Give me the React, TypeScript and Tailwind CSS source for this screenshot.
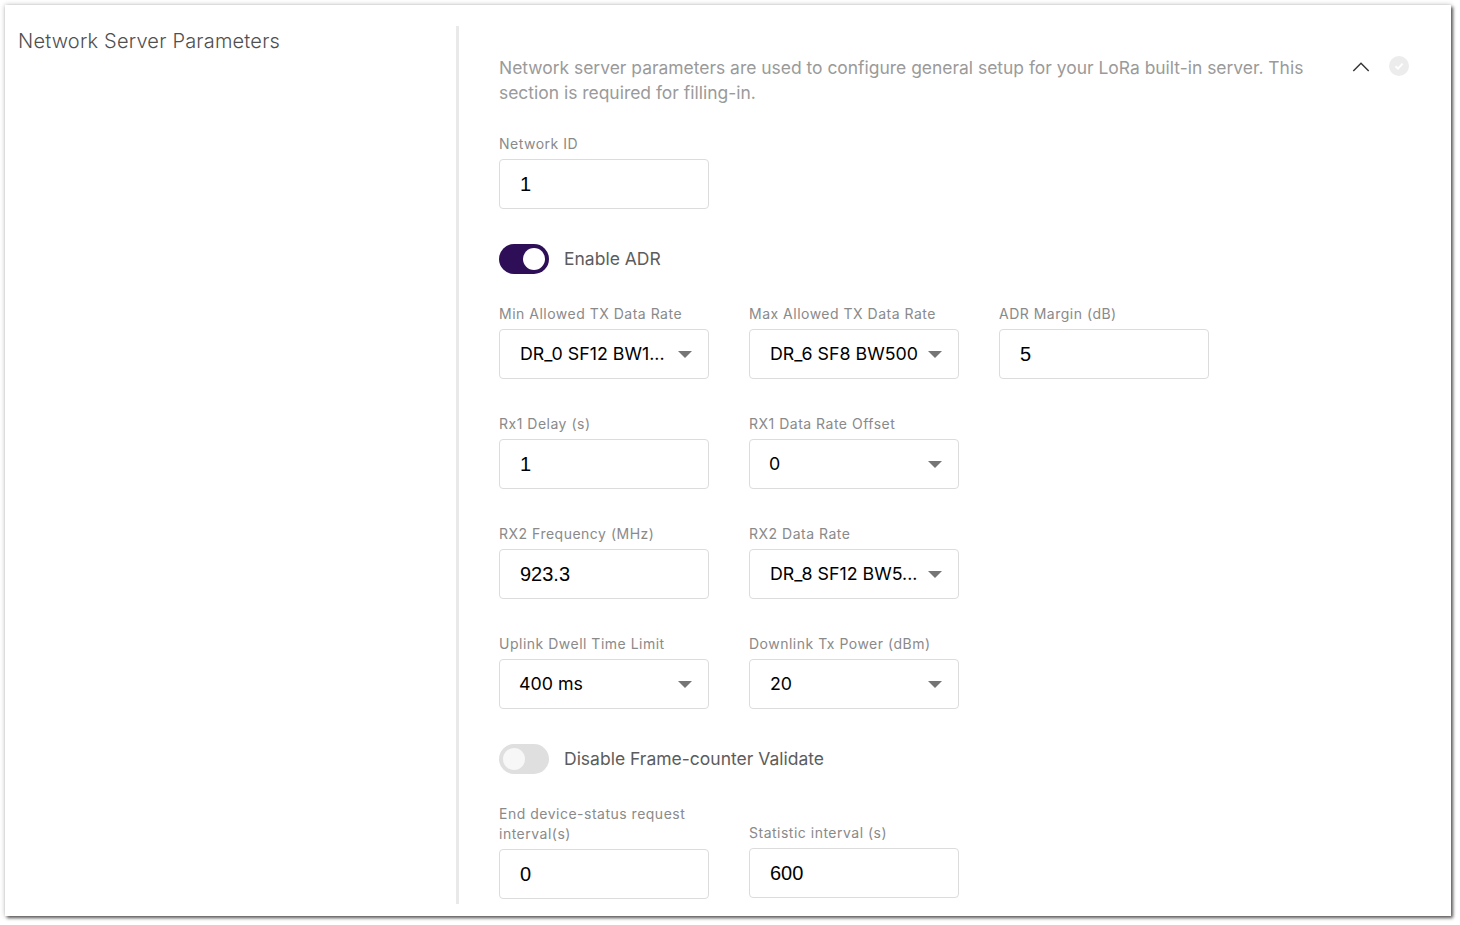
function Label({ children }: { children: React.ReactNode }) {
  return <div className="mb-[5px] text-[14px] leading-[20px] tracking-[0.5px] text-[#8a8a8a]">{children}</div>;
}

function TextField({ label, value }: { label: string; value: string }) {
  return (
    <div className="w-[210px]">
      <Label>{label}</Label>
      <div className="flex h-[50px] items-center rounded border border-[#dcdcdc] bg-white pl-[20px] font-['Liberation_Sans',sans-serif] text-[20px] text-black">
        {value}
      </div>
    </div>
  );
}

function SelectField({ label, value, pad = "pl-[20px]" }: { label: string; value: string; pad?: string }) {
  return (
    <div className="w-[210px]">
      <Label>{label}</Label>
      <div className={`flex h-[50px] items-center justify-between rounded border border-[#dcdcdc] bg-white pr-[16px] text-[17.8px] text-black ${pad}`}>
        <span>{value}</span>
        <span className="h-0 w-0 border-x-[7px] border-t-[7px] border-x-transparent border-t-[#757575]" />
      </div>
    </div>
  );
}

function Toggle({ on, label }: { on: boolean; label: string }) {
  return (
    <div className="flex h-[30px] items-center gap-[15px]">
      {on ? (
        <div className="flex h-[30px] w-[50px] items-center justify-end rounded-full bg-[#2e0f57] pr-[4px]">
          <div className="h-[22px] w-[22px] rounded-full bg-white" />
        </div>
      ) : (
        <div className="flex h-[30px] w-[50px] items-center rounded-full bg-[#dfdfdf] pl-[4px]">
          <div className="h-[22px] w-[22px] rounded-full bg-[#f7f7f7]" />
        </div>
      )}
      <span className="text-[17.5px] text-[#5c5c5c]">{label}</span>
    </div>
  );
}

export default function App() {
  return (
    <div className="h-[925px] w-[1460px] bg-white pl-[5px] pt-[5px] font-['Inter',sans-serif]">
      <div className="flex h-[911px] w-[1446px] bg-white pb-[12px] pt-[21px] shadow-[2px_2px_3px_rgba(0,0,0,0.6),0_0_5px_rgba(0,0,0,0.25)]">
        <div className="w-[451px] shrink-0 pl-[13px] text-[20px] font-light leading-[30px] tracking-[0.2px] text-[#4f4f4f]">
          Network Server Parameters
        </div>
        <div className="flex-1 border-l-[3px] border-[#e9e9e9] pl-[40px] pt-[29px]">
          <div className="flex items-start">
            <p className="w-[820px] text-[17.45px] leading-[25px] text-[#9a9a9a]">
              Network server parameters are used to configure general setup for your LoRa built-in server. This section is required for filling-in.
            </p>
            <svg className="ml-[30px] mt-[1px] shrink-0" width="24" height="24" viewBox="0 0 24 24" fill="none">
              <path d="M4.3 15 12 7.3 19.7 15" stroke="#333333" strokeWidth="1.4" />
            </svg>
            <div className="ml-[16px] mt-[1px] flex h-[20px] w-[20px] items-center justify-center rounded-full bg-[#ececec]">
              <svg width="12" height="12" viewBox="0 0 12 12" fill="none">
                <path d="M2.5 6.2 5 8.6 9.6 3.6" stroke="#ffffff" strokeWidth="2" />
              </svg>
            </div>
          </div>

          <div className="mt-[29px]">
            <TextField label="Network ID" value="1" />
          </div>
          <div className="mt-[35px]">
            <Toggle on label="Enable ADR" />
          </div>
          <div className="mt-[30px] flex gap-[40px]">
            <SelectField label="Min Allowed TX Data Rate" value="DR_0 SF12 BW1..." />
            <SelectField label="Max Allowed TX Data Rate" value="DR_6 SF8 BW500" />
            <TextField label="ADR Margin (dB)" value="5" />
          </div>
          <div className="mt-[35px] flex gap-[40px]">
            <TextField label="Rx1 Delay (s)" value="1" />
            <SelectField label="RX1 Data Rate Offset" value="0" pad="pl-[19px]" />
          </div>
          <div className="mt-[35px] flex gap-[40px]">
            <TextField label="RX2 Frequency (MHz)" value="923.3" />
            <SelectField label="RX2 Data Rate" value="DR_8 SF12 BW5..." />
          </div>
          <div className="mt-[35px] flex gap-[40px]">
            <SelectField label="Uplink Dwell Time Limit" value="400 ms" pad="pl-[19px]" />
            <SelectField label="Downlink Tx Power (dBm)" value="20" />
          </div>
          <div className="mt-[35px]">
            <Toggle on={false} label="Disable Frame-counter Validate" />
          </div>
          <div className="mt-[30px] flex items-end gap-[40px]">
            <TextField label="End device-status request interval(s)" value="0" />
            <div className="mb-px">
              <TextField label="Statistic interval (s)" value="600" />
            </div>
          </div>
        </div>
      </div>
    </div>
  );
}
